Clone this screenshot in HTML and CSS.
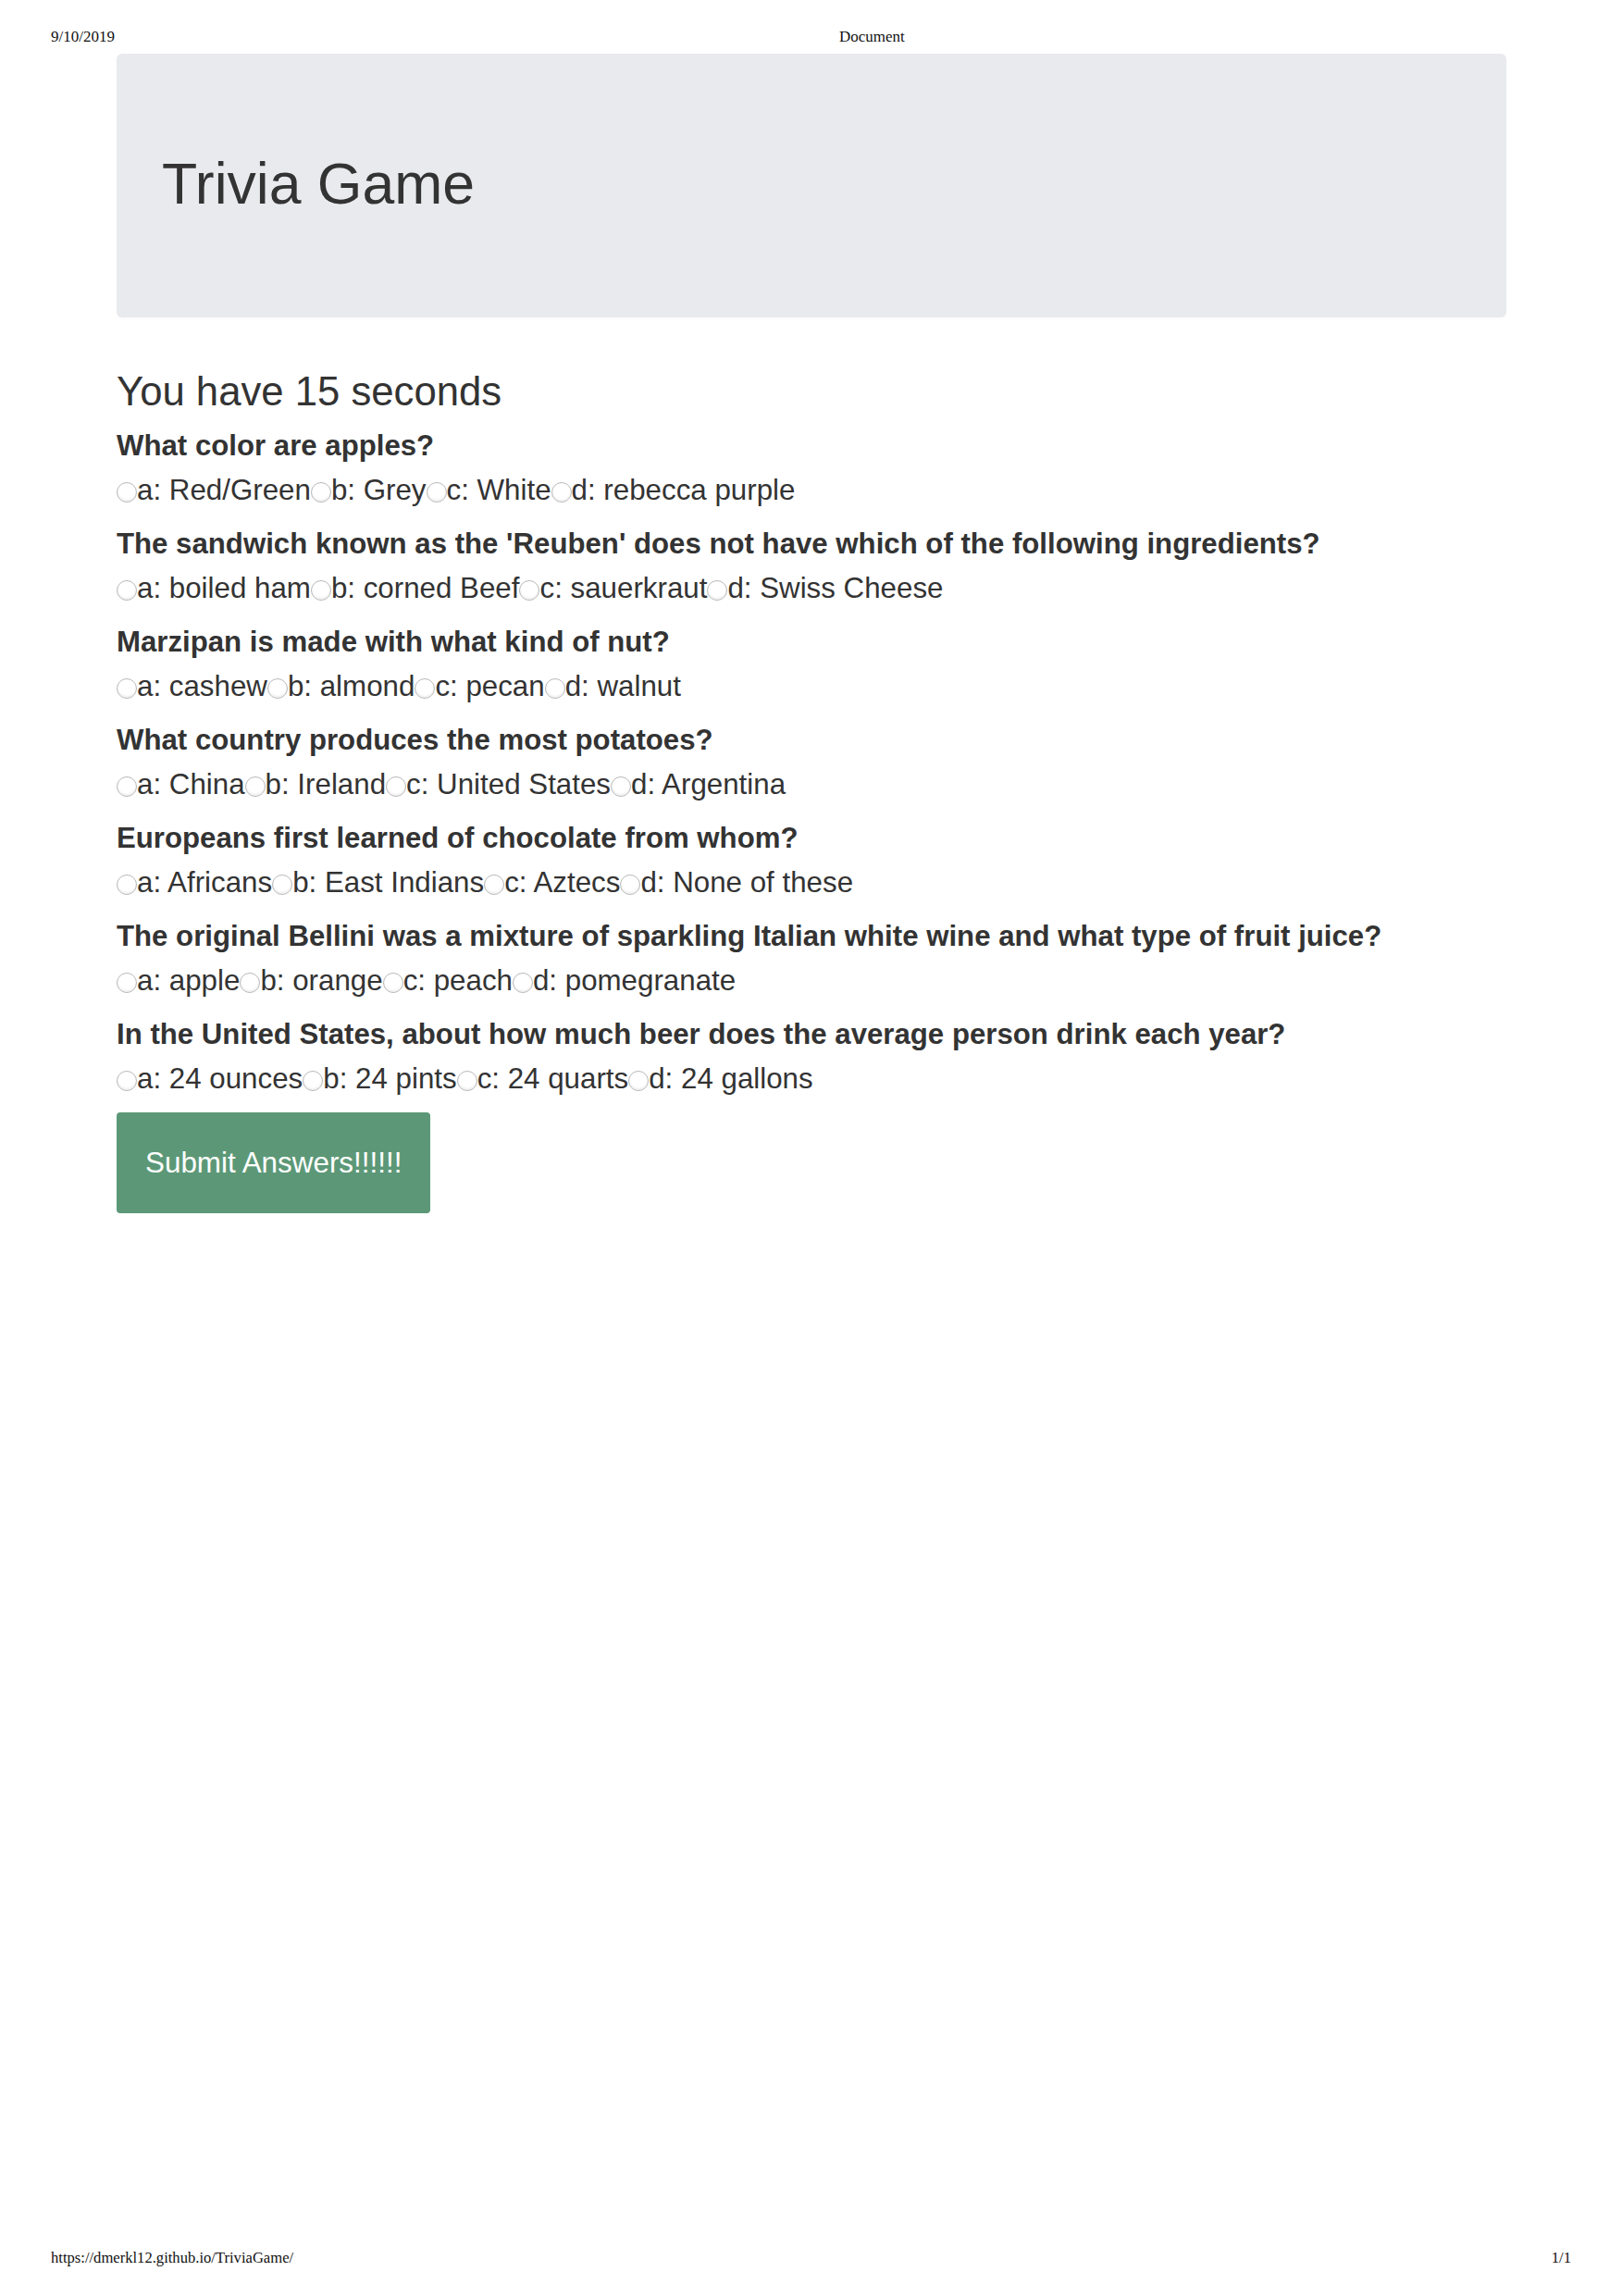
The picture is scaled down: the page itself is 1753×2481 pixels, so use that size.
FILE: index.html
```html
<!DOCTYPE html>
<html lang="en">
<head>
<meta charset="utf-8">
<title>Document</title>
<link rel="stylesheet" href="styles.css">
</head>
<body>
<div class="page">
  <header class="print-head">
    <span class="print-date">9/10/2019</span>
    <span class="print-title">Document</span>
  </header>

  <main class="container">
    <div class="jumbotron">
      <h1 class="display">Trivia Game</h1>
    </div>

    <h2 class="timer">You have 15 seconds</h2>

    <form class="quiz">
      <div class="question">
        <h4 class="q-text">What color are apples?</h4>
        <div class="answers">
          <input type="radio" name="q1" class="radio"><span>a: Red/Green</span><input type="radio" name="q1" class="radio"><span>b: Grey</span><input type="radio" name="q1" class="radio"><span>c: White</span><input type="radio" name="q1" class="radio"><span>d: rebecca purple</span>
        </div>
      </div>
      <div class="question">
        <h4 class="q-text">The sandwich known as the 'Reuben' does not have which of the following ingredients?</h4>
        <div class="answers">
          <input type="radio" name="q2" class="radio"><span>a: boiled ham</span><input type="radio" name="q2" class="radio"><span>b: corned Beef</span><input type="radio" name="q2" class="radio"><span>c: sauerkraut</span><input type="radio" name="q2" class="radio"><span>d: Swiss Cheese</span>
        </div>
      </div>
      <div class="question">
        <h4 class="q-text">Marzipan is made with what kind of nut?</h4>
        <div class="answers">
          <input type="radio" name="q3" class="radio"><span>a: cashew</span><input type="radio" name="q3" class="radio"><span>b: almond</span><input type="radio" name="q3" class="radio"><span>c: pecan</span><input type="radio" name="q3" class="radio"><span>d: walnut</span>
        </div>
      </div>
      <div class="question">
        <h4 class="q-text">What country produces the most potatoes?</h4>
        <div class="answers">
          <input type="radio" name="q4" class="radio"><span>a: China</span><input type="radio" name="q4" class="radio"><span>b: Ireland</span><input type="radio" name="q4" class="radio"><span>c: United States</span><input type="radio" name="q4" class="radio"><span>d: Argentina</span>
        </div>
      </div>
      <div class="question">
        <h4 class="q-text">Europeans first learned of chocolate from whom?</h4>
        <div class="answers">
          <input type="radio" name="q5" class="radio"><span>a: Africans</span><input type="radio" name="q5" class="radio"><span>b: East Indians</span><input type="radio" name="q5" class="radio"><span>c: Aztecs</span><input type="radio" name="q5" class="radio"><span>d: None of these</span>
        </div>
      </div>
      <div class="question">
        <h4 class="q-text">The original Bellini was a mixture of sparkling Italian white wine and what type of fruit juice?</h4>
        <div class="answers">
          <input type="radio" name="q6" class="radio"><span>a: apple</span><input type="radio" name="q6" class="radio"><span>b: orange</span><input type="radio" name="q6" class="radio"><span>c: peach</span><input type="radio" name="q6" class="radio"><span>d: pomegranate</span>
        </div>
      </div>
      <div class="question question-last">
        <h4 class="q-text">In the United States, about how much beer does the average person drink each year?</h4>
        <div class="answers">
          <input type="radio" name="q7" class="radio"><span>a: 24 ounces</span><input type="radio" name="q7" class="radio"><span>b: 24 pints</span><input type="radio" name="q7" class="radio"><span>c: 24 quarts</span><input type="radio" name="q7" class="radio"><span>d: 24 gallons</span>
        </div>
      </div>

      <button type="button" class="btn-submit">Submit Answers!!!!!!</button>
    </form>
  </main>

  <footer class="print-foot">
    <span>https://dmerkl12.github.io/TriviaGame/</span>
    <span>1/1</span>
  </footer>
</div>
</body>
</html>
```

FILE: styles.css
```css
html, body {
  margin: 0;
  padding: 0;
  background: #ffffff;
}

.page {
  min-height: 2481px;
  display: flex;
  flex-direction: column;
  font-family: "Liberation Sans", Arial, Helvetica, sans-serif;
  color: #333333;
}

.print-head,
.print-foot {
  font-family: "Liberation Serif", "Times New Roman", serif;
  line-height: 20px;
  color: #111111;
  padding: 0 55px;
  display: flex;
}

.print-head {
  font-size: 17px;
  padding-top: 30px;
}

.print-title {
  margin-left: 783px;
}

.print-foot {
  font-size: 16.6px;
  margin-top: auto;
  padding-bottom: 31px;
  justify-content: space-between;
}

.container {
  margin: 8px 125px 0 126px;
}

.jumbotron {
  background: #e9eaee;
  border-radius: 6px;
  padding: 100px 49px 105px;
  box-shadow: 0 2px 2px rgba(0, 0, 0, 0.02);
}

.display {
  margin: 0;
  font-size: 62.5px;
  line-height: 80px;
  font-weight: 400;
  color: #333333;
}

.timer {
  margin: 54px 0 0;
  font-size: 43.7px;
  line-height: 52px;
  font-weight: 400;
}

.quiz {
  margin-top: 13px;
}

.question {
  margin-bottom: 15px;
}

.question-last {
  margin-bottom: 13px;
}

.q-text {
  margin: 0 0 5px;
  font-size: 31.2px;
  line-height: 40px;
  font-weight: 700;
  white-space: nowrap;
}

.answers {
  font-size: 31.3px;
  line-height: 46px;
  white-space: nowrap;
}

.radio {
  -webkit-appearance: none;
  appearance: none;
  width: 22px;
  height: 22px;
  margin: 0;
  border: 1px solid #b9b9b9;
  border-radius: 50%;
  background: #ffffff;
  box-shadow: inset 0 -2px 2px rgba(0, 0, 0, 0.06);
  vertical-align: -3px;
  box-sizing: border-box;
}

.btn-submit {
  display: block;
  margin: 0;
  padding: 36px 31px 36px 31px;
  font-family: "Liberation Sans", Arial, Helvetica, sans-serif;
  font-size: 31.4px;
  line-height: 37px;
  color: #ffffff;
  background: #5c9877;
  border: 0;
  border-radius: 4px;
}
```
